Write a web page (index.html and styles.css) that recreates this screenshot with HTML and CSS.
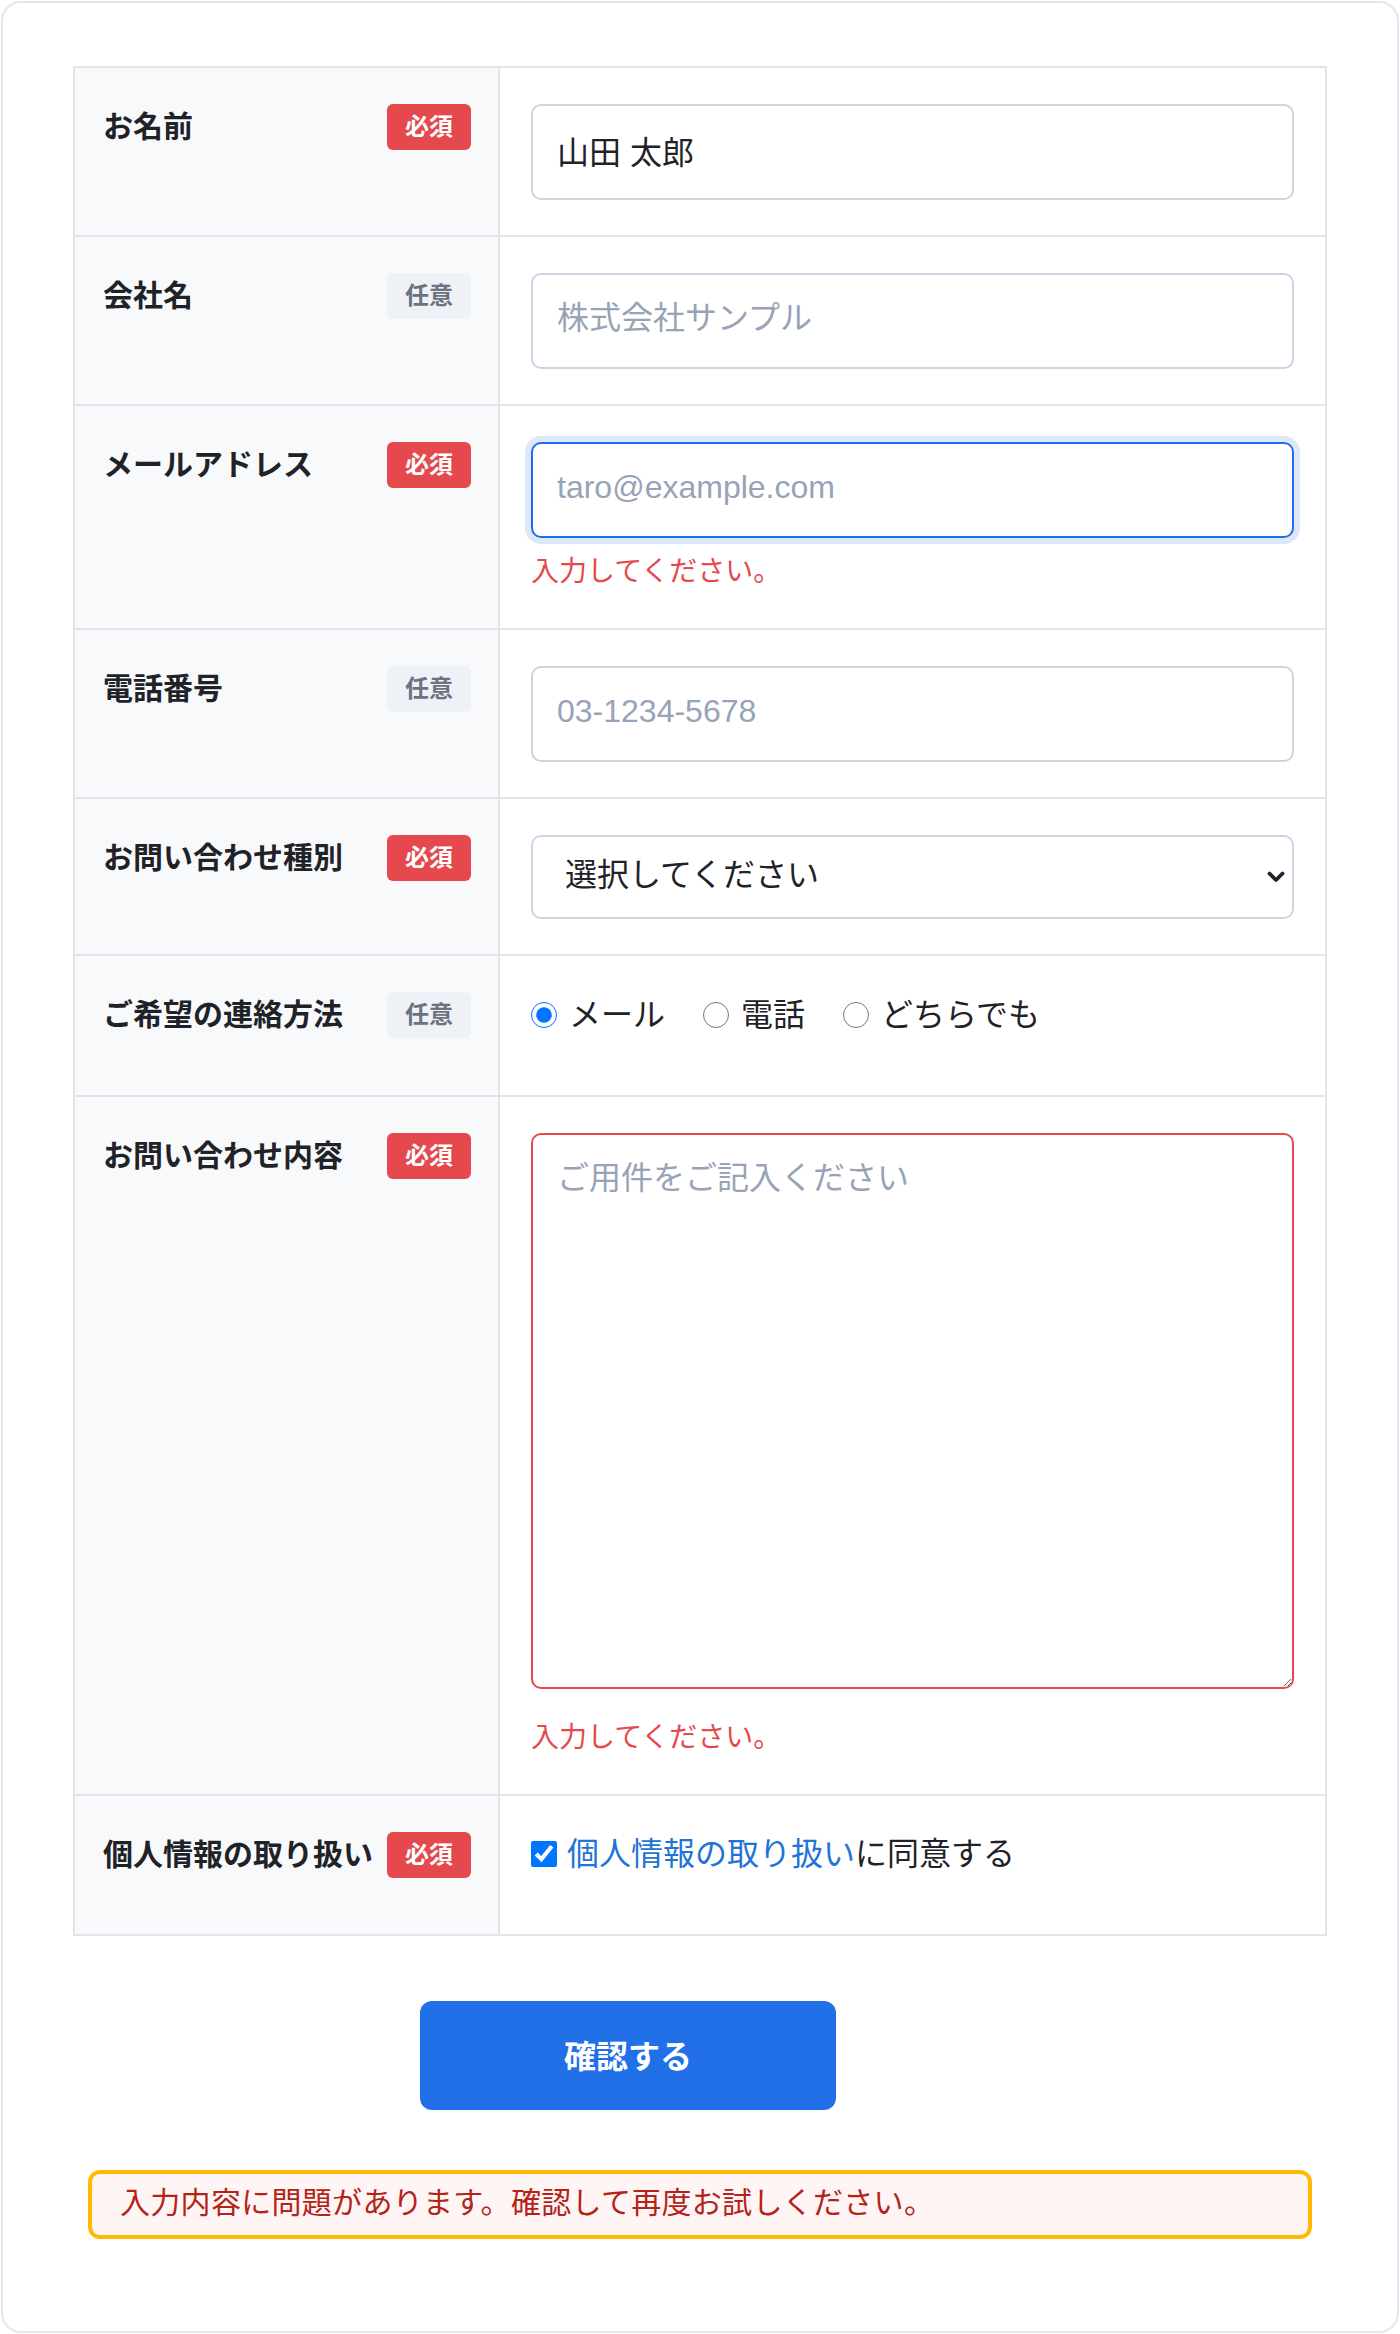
FILE: index.html
```html
<!DOCTYPE html>
<html lang="ja">
<head>
    <meta charset="UTF-8">
    <meta name="viewport" content="width=device-width, initial-scale=1.0">
    <title>お問い合わせ</title>
    <link rel="stylesheet" href="styles.css">
</head>
<body>
    <div class="card">
        <form class="contact-form" novalidate>
            <div class="form-table">
                <div class="form-row">
                    <div class="form-label">
                        <span class="label-text">お名前</span>
                        <span class="badge required">必須</span>
                    </div>
                    <div class="form-field">
                        <input type="text" class="input" value="山田 太郎">
                    </div>
                </div>

                <div class="form-row">
                    <div class="form-label">
                        <span class="label-text">会社名</span>
                        <span class="badge optional">任意</span>
                    </div>
                    <div class="form-field">
                        <input type="text" class="input" placeholder="株式会社サンプル">
                    </div>
                </div>

                <div class="form-row">
                    <div class="form-label">
                        <span class="label-text">メールアドレス</span>
                        <span class="badge required">必須</span>
                    </div>
                    <div class="form-field">
                        <input type="email" class="input is-focus" placeholder="taro@example.com">
                        <p class="error">入力してください。</p>
                    </div>
                </div>

                <div class="form-row">
                    <div class="form-label">
                        <span class="label-text">電話番号</span>
                        <span class="badge optional">任意</span>
                    </div>
                    <div class="form-field">
                        <input type="tel" class="input" placeholder="03-1234-5678">
                    </div>
                </div>

                <div class="form-row">
                    <div class="form-label">
                        <span class="label-text">お問い合わせ種別</span>
                        <span class="badge required">必須</span>
                    </div>
                    <div class="form-field">
                        <div class="select-wrap">
                            <select class="select">
                                <option>選択してください</option>
                                <option>製品について</option>
                                <option>お見積り</option>
                                <option>その他</option>
                            </select>
                            <svg class="select-arrow" width="18" height="12" viewBox="0 0 18 12" aria-hidden="true">
                                <polyline points="2.5,2.5 9,9 15.5,2.5" fill="none" stroke="#1f2328" stroke-width="3.8" stroke-linecap="round" stroke-linejoin="round"/>
                            </svg>
                        </div>
                    </div>
                </div>

                <div class="form-row">
                    <div class="form-label">
                        <span class="label-text">ご希望の連絡方法</span>
                        <span class="badge optional">任意</span>
                    </div>
                    <div class="form-field">
                        <div class="choices">
                            <label class="choice"><input type="radio" name="contact" checked>メール</label>
                            <label class="choice"><input type="radio" name="contact">電話</label>
                            <label class="choice"><input type="radio" name="contact">どちらでも</label>
                        </div>
                    </div>
                </div>

                <div class="form-row">
                    <div class="form-label">
                        <span class="label-text">お問い合わせ内容</span>
                        <span class="badge required">必須</span>
                    </div>
                    <div class="form-field">
                        <textarea class="textarea is-invalid" placeholder="ご用件をご記入ください"></textarea>
                        <p class="error">入力してください。</p>
                    </div>
                </div>

                <div class="form-row">
                    <div class="form-label">
                        <span class="label-text">個人情報の取り扱い</span>
                        <span class="badge required">必須</span>
                    </div>
                    <div class="form-field">
                        <label class="agree"><input type="checkbox" checked><a href="#">個人情報の取り扱い</a>に同意する</label>
                    </div>
                </div>
            </div>

            <div class="actions">
                <button type="submit" class="btn-submit">確認する</button>
            </div>

            <div class="alert">入力内容に問題があります。確認して再度お試しください。</div>
        </form>
    </div>
</body>
</html>
```

FILE: styles.css
```css
body {
    margin: 0;
    padding: 1px;
    font-family: "Liberation Sans", "Noto Sans CJK JP", sans-serif;
    color: #1f2328;
    background: #fff;
}
.card {
    box-sizing: border-box;
    min-height: calc(100vh - 2px);
    padding: 63px 70px 90px;
    border: 2px solid #e3e6ea;
    border-radius: 20px;
    background: #fff;
}
.form-table {
    border: 2px solid #e1e5ea;
}
.form-row {
    display: grid;
    grid-template-columns: 425px 1fr;
}
.form-row + .form-row {
    border-top: 2px solid #e1e5ea;
}
.form-label {
    display: flex;
    justify-content: space-between;
    align-items: flex-start;
    gap: 8px;
    padding: 36px 27px 35px 28px;
    background: #f8f9fb;
    border-right: 2px solid #e1e5ea;
}
.label-text {
    font-size: 30px;
    line-height: 45px;
    font-weight: 700;
}
.badge {
    flex-shrink: 0;
    padding: 8px 18px;
    border-radius: 6px;
    font-size: 24px;
    line-height: 30px;
    font-weight: 700;
}
.badge.required {
    background: #e5484d;
    color: #fff;
}
.badge.optional {
    background: #eef1f5;
    color: #6b7280;
}
.form-field {
    padding: 36px 31px 35px;
    font-size: 32px;
    line-height: 48px;
}
.input,
.select,
.textarea {
    box-sizing: border-box;
    display: block;
    width: 100%;
    border: 2px solid #cbd5e1;
    border-radius: 10px;
    background: #fff;
    color: #1f2328;
    font-family: inherit;
    font-size: 32px;
}
.input {
    height: 96px;
    padding: 0 24px 5px;
}
.input::placeholder,
.textarea::placeholder {
    color: #97a3b6;
}
.input.is-focus {
    border-color: #1f6feb;
    box-shadow: 0 0 0 6px #dde8fb;
    outline: none;
}
.select-wrap {
    position: relative;
}
.select {
    height: 84px;
    padding: 0 48px 5px 32px;
    appearance: none;
    -webkit-appearance: none;
}
.select-arrow {
    position: absolute;
    right: 9px;
    top: 50%;
    transform: translateY(-50%);
    pointer-events: none;
}
.textarea {
    height: 556px;
    padding: 19px 24px;
    line-height: 48px;
    resize: vertical;
}
.textarea.is-invalid {
    border-color: #e5484d;
}
.error {
    margin: 12px 0 0;
    color: #e5484d;
    font-size: 28px;
    line-height: 43px;
}
.textarea + .error {
    margin-top: 27px;
}
.choices {
    display: flex;
    align-items: center;
    gap: 38px;
    padding: 0 0 22px;
    line-height: 46px;
}
.choice,
.agree {
    display: inline-flex;
    align-items: center;
}
.choice input {
    width: 26px;
    height: 26px;
    margin: 0 12px 0 0;
}
.agree {
    padding-bottom: 24px;
    line-height: 42px;
}
.agree input {
    width: 26px;
    height: 26px;
    margin: 0 10px 0 0;
}
.agree a {
    color: #1f74d6;
    text-decoration: none;
}
.actions {
    margin-top: 65px;
    padding-left: 347px;
}
.btn-submit {
    width: 416px;
    height: 109px;
    padding: 0 0 4px;
    border: none;
    border-radius: 12px;
    background: #2170e8;
    color: #fff;
    font-family: inherit;
    font-size: 32px;
    font-weight: 700;
    cursor: pointer;
}
.alert {
    margin: 60px 15px 0;
    padding: 6px 28px 10px;
    border: 4px solid #ffb900;
    border-radius: 12px;
    background: #fff5f5;
    color: #b42318;
    font-size: 30px;
    line-height: 45px;
    letter-spacing: 0.3px;
}
```
